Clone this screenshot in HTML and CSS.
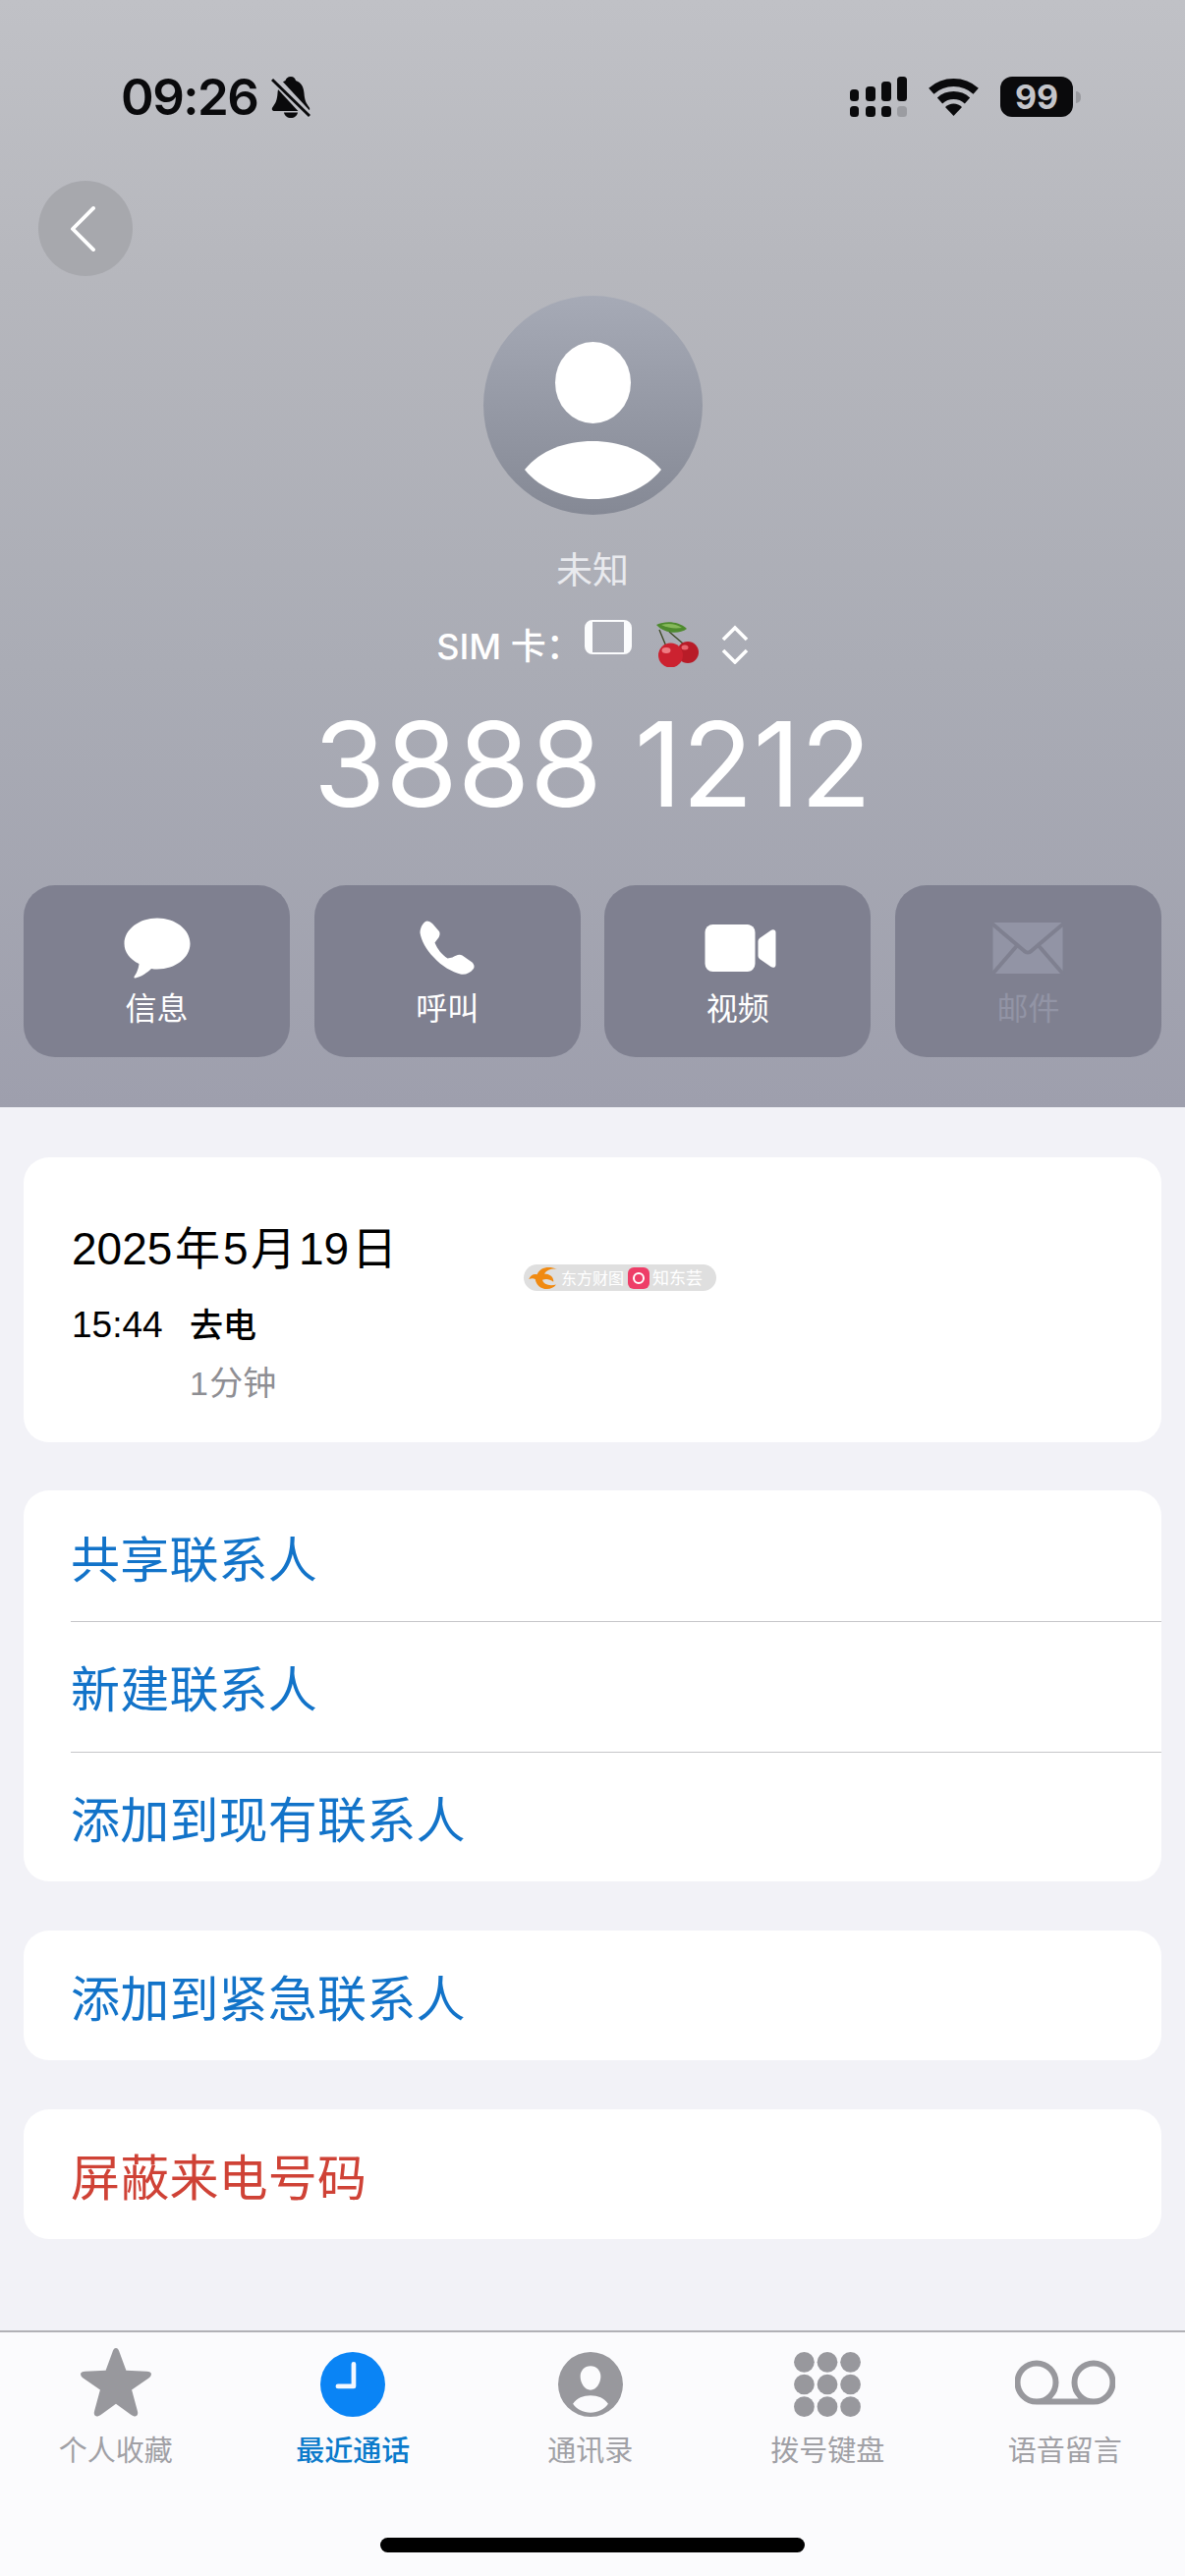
FILE: index.html
```html
<!DOCTYPE html>
<html lang="zh-CN">
<head>
<meta charset="utf-8">
<title>未知</title>
<link rel="stylesheet" href="styles.css">
</head>
<body>
<div class="phone">
  <header class="hero">
    <div class="status">
      <div class="status-left">
        <span class="clock">09:26</span>
        <svg class="bell" viewBox="0 0 40 43"><path d="M20 1c3 0 4.500 2 5 4 6 2 8 7 8.500 13 .5 7 2 10 5 14 1.500 2 .5 4-2 4H3.500c-2.500 0-3.500-2-2-4 3-4 4.500-7 5-14C7 12 9 7 14.500 5c.5-2 2.500-4 5.500-4z" fill="#0a0a0c"/><path d="M13 37.500h14c-.5 3.500-3.500 5.500-7 5.500s-6.500-2-7-5.500z" fill="#0a0a0c"/><path d="M0 0 40 43" stroke="#bfc0c6" stroke-width="9"/><path d="M1 4 39 41" stroke="#0a0a0c" stroke-width="3"/></svg>
      </div>
      <div class="status-right">
        <svg class="signal" viewBox="0 0 58 41"><g fill="#0a0a0c"><rect x="0" y="13" width="9" height="12" rx="3.500"/><rect x="16" y="10" width="10" height="15" rx="3.500"/><rect x="32" y="5" width="10" height="20" rx="3.500"/><rect x="48" y="0" width="10" height="25" rx="3.500"/><rect x="0" y="30" width="9" height="11" rx="3.500"/><rect x="16" y="30" width="10" height="11" rx="3.500"/><rect x="32" y="30" width="10" height="11" rx="3.500"/></g><rect x="48" y="30" width="10" height="11" rx="3.500" fill="#9b9ca1"/></svg>
        <svg class="wifi" viewBox="0 0 51 38"><path d="M2.800 12.700A34 34 0 0 1 48.200 12.700M11.500 22.400A21 21 0 0 1 39.500 22.400" fill="none" stroke="#0a0a0c" stroke-width="8"/><path d="M25.500 38 17 29A12 12 0 0 1 34 29z" fill="#0a0a0c"/></svg>
        <div class="battery"><span class="battery-level">99</span></div>
        <span class="battery-nub"></span>
      </div>
    </div>
    <button class="back" type="button" aria-label="返回">
      <svg class="back-chevron" viewBox="0 0 28 48"><path d="M25 2 3 24l22 22" fill="none" stroke="#fff" stroke-width="4" stroke-linecap="round" stroke-linejoin="round"/></svg>
    </button>
    <div class="avatar">
      <svg class="avatar-figure" viewBox="0 0 223 223"><ellipse cx="111.500" cy="88.500" rx="38.500" ry="41.500" fill="#fff"/><path d="M42 177C58 157 84 148 111 148s53 9 70 29c-16 20-42 30-69 30s-54-10-70-30z" fill="#fff"/></svg>
    </div>
    <div class="name">未知</div>
    <div class="sim-row">
      <span class="sim-label">SIM 卡：</span>
      <span class="sim-card"></span>
      <svg class="cherry" viewBox="0 0 44 46">
        <path d="M3 8 10 25M13 10 27 22" stroke="#3f4a28" stroke-width="1.400" fill="none"/>
        <path d="M0 3C9-1 22-1 31 7 23 13 8 12 0 3z" fill="#4e8a2e"/>
        <path d="M5 3c8-2 15-1 21 3-8 1-15 0-21-3z" fill="#86b85a"/>
        <circle cx="32" cy="31" r="11" fill="#b81c28"/>
        <circle cx="14.500" cy="34" r="12.500" fill="#cc2230"/>
        <ellipse cx="10" cy="29" rx="4.500" ry="3" fill="#ee7c82"/>
        <ellipse cx="29" cy="26" rx="3.500" ry="2.500" fill="#e8666e"/>
      </svg>
      <svg class="updown" viewBox="0 0 28 40"><path d="M2 15 14 3l12 12M2 26l12 12 12-12" fill="none" stroke="#fff" stroke-width="3.600"/></svg>
    </div>
    <div class="number">3888 1212</div>
    <nav class="actions">
      <a class="action">
        <svg class="action-icon" viewBox="0 0 80 62"><path transform="translate(6.500 .5)" d="M33.500 0C52 0 67 11.500 67 26S52 52 33.500 52c-2 0-4 0-6-.5-4 4-10 8-16 9.500-1.500.3-2-.8-1.300-1.800C12 57 14.500 52 15 46.500 5.500 42 0 34.500 0 26 0 11.500 15 0 33.500 0z" fill="#fff"/></svg>
        <span>信息</span>
      </a>
      <a class="action">
        <svg class="action-icon" viewBox="0 0 80 62"><path transform="translate(12.500 3.500)" d="M7 0C9 0 11 1 13 3L19 10C21 12 20 16 18 18L15 22C18 29 22 34 28 38L33 37C36 35 40 33 43 35L53 42C55 44 56 47 54 49 51 53 46 55 41 54 33 52 22 46 14 37 6 29 1 19 0 12 0 7 3 1 7 0z" fill="#fff"/></svg>
        <span>呼叫</span>
      </a>
      <a class="action">
        <svg class="action-icon" viewBox="0 0 80 62"><g transform="translate(6.500 7)" fill="#fff"><rect x="0" y="0" width="51" height="48" rx="8"/><path d="M54 17c0-1 .5-2 1.500-3L67 6c2-1.500 5-1 5 2v33c0 3-3 3.500-5 2L55.500 35c-1-1-1.500-2-1.500-3z"/></g></svg>
        <span>视频</span>
      </a>
      <a class="action action-muted">
        <svg class="action-icon" viewBox="0 0 80 62"><g transform="translate(4.500 5)"><rect x="0" y="0" width="71" height="52" rx="2" fill="#9294a5"/><path d="M-1 1 32 29c2 2 5 2 7 0L72 1M-1 53 25 23M72 53 46 23" fill="none" stroke="#7f8090" stroke-width="4"/></g></svg>
        <span>邮件</span>
      </a>
    </nav>
  </header>

  <main class="details">
    <section class="card call-card">
      <div class="call-date">2025 年 5 月 19 日</div>
      <div class="call-row">
        <span class="call-time">15:44</span>
        <div class="call-info">
          <div class="call-kind">去电</div>
          <div class="call-length">1 分钟</div>
        </div>
      </div>
      <div class="stamp">
        <svg class="stamp-logo" viewBox="0 0 32 26"><path d="M31 3C22-1 12 1 9 9 5 8 2 10 0 14c3-1 5-1 7 0 1 6 6 11 13 11 4 0 8-2 10-5-7 2-14 0-15-5 4-2 8-1 12 2 1-5-4-9-10-9 3-4 8-6 14-5z" fill="#f08a12"/></svg>
        <span class="stamp-text">东方财图</span>
        <span class="stamp-badge"><span class="stamp-eye"></span></span>
        <span class="stamp-text stamp-text-short">知东芸</span>
      </div>
    </section>

    <section class="card">
      <a class="row">共享联系人</a>
      <a class="row">新建联系人</a>
      <a class="row">添加到现有联系人</a>
    </section>
    <section class="card">
      <a class="row">添加到紧急联系人</a>
    </section>
    <section class="card">
      <a class="row row-danger">屏蔽来电号码</a>
    </section>
  </main>

  <footer class="tabbar">
    <div class="tabs">
      <a class="tab">
        <svg class="tab-icon" viewBox="0 0 76 74"><path d="M38 0c2 0 3 2 4 5l7 19 22 1c3 0 5 1 5 3 0 1.500-1 3-3 4.500L55 45l6 22c1 3 .5 5-1 6-1.500 1-3.500 0-6-1.500L38 60 22 71.500c-2.500 1.500-4.500 2.500-6 1.500-1.500-1-2-3-1-6l6-22L3 32.500C1 31 0 29.500 0 28c0-2 2-3 5-3l22-1 7-19c1-3 2-5 4-5z" fill="#98989d"/></svg>
        <span>个人收藏</span>
      </a>
      <a class="tab tab-active">
        <svg class="tab-icon tab-icon-round" viewBox="0 0 70 70"><circle cx="35" cy="35" r="35" fill="#0a84f5"/><path d="M36 13v24H19" fill="none" stroke="#f3f8ff" stroke-width="5" stroke-linecap="round" stroke-linejoin="round"/></svg>
        <span>最近通话</span>
      </a>
      <a class="tab">
        <svg class="tab-icon tab-icon-round" viewBox="0 0 70 70"><path fill-rule="evenodd" d="M35 0a35 35 0 1 1 0 70 35 35 0 0 1 0-70zM35 15c-6.500 0-11 5-11 11.500S28.500 41 35 41s11-8 11-14.500S41.500 15 35 15zM35 47c-8 0-15 3-19 9 4 6 11 9.500 19 9.500S50 62 54 56c-4-6-11-9-19-9z" fill="#98989d"/></svg>
        <span>通讯录</span>
      </a>
      <a class="tab">
        <svg class="tab-icon tab-icon-round" viewBox="0 0 72 70"><g fill="#98989d"><circle cx="11" cy="11" r="11"/><circle cx="36" cy="11" r="11"/><circle cx="61" cy="11" r="11"/><circle cx="11" cy="35" r="11"/><circle cx="36" cy="35" r="11"/><circle cx="61" cy="35" r="11"/><circle cx="11" cy="59" r="11"/><circle cx="36" cy="59" r="11"/><circle cx="61" cy="59" r="11"/></g></svg>
        <span>拨号键盘</span>
      </a>
      <a class="tab">
        <svg class="tab-icon tab-icon-wide" viewBox="0 0 102 46"><path d="M22 42.500a19.500 19.500 0 1 1 0-39 19.500 19.500 0 0 1 0 39h58a19.500 19.500 0 1 0 0-39 19.500 19.500 0 0 0 0 39" fill="none" stroke="#98989d" stroke-width="6"/></svg>
        <span>语音留言</span>
      </a>
    </div>
    <div class="home-indicator"></div>
  </footer>
</div>
</body>
</html>
```

FILE: styles.css
```css
* { box-sizing: border-box; }

html, body { margin: 0; padding: 0; }

body {
  width: 1206px;
  height: 2622px;
  overflow: hidden;
  background: #f2f2f7;
  font-family: "Inter", "Liberation Sans", "Noto Sans CJK SC", sans-serif;
  color: #000;
}

.phone {
  display: flex;
  flex-direction: column;
  height: 2622px;
}

/* Contact header */
.hero {
  display: flex;
  flex-direction: column;
  height: 1127px;
  padding: 0 24px;
  background: linear-gradient(180deg, #c0c1c6 0%, #b6b7bd 25%, #aaacb5 60%, #9e9fad 100%);
}

.status {
  display: flex;
  justify-content: space-between;
  align-items: center;
  height: 43px;
  margin: 77px 82px 0 99px;
}

.status-left, .status-right { display: flex; align-items: center; }

.clock {
  font-size: 51px;
  font-weight: 600;
  line-height: 43px;
  letter-spacing: -1.500px;
  color: #0a0a0c;
}

.bell { width: 40px; height: 43px; margin-left: 14px; }

.signal { width: 58px; height: 41px; }

.wifi { width: 51px; height: 38px; margin-left: 22px; }

.battery {
  width: 74px;
  height: 41px;
  margin-left: 22px;
  border-radius: 12px;
  background: #0a0a0c;
  display: flex;
  align-items: center;
  justify-content: center;
}

.battery-level {
  font-size: 34px;
  font-weight: 700;
  line-height: 41px;
  color: #c4c5ca;
}

.battery-nub {
  width: 5px;
  height: 12px;
  margin-left: 3px;
  border-radius: 0 6px 6px 0;
  background: #9a9ba0;
}

.back {
  display: flex;
  align-items: center;
  justify-content: center;
  align-self: flex-start;
  width: 96px;
  height: 97px;
  margin: 64px 0 0 15px;
  padding: 0 6px 0 0;
  border: 0;
  border-radius: 50%;
  background: #a7a8ad;
}

.back-chevron { width: 27px; height: 46px; }

.avatar {
  align-self: center;
  width: 223px;
  height: 223px;
  margin-top: 20px;
  border-radius: 50%;
  background: linear-gradient(180deg, #a6aab6 0%, #858995 100%);
}

.avatar-figure { display: block; width: 223px; height: 223px; }

.name {
  margin-top: 34px;
  text-align: center;
  font-size: 37px;
  line-height: 46px;
  color: #e9eaee;
}

.sim-row {
  display: flex;
  align-items: center;
  justify-content: center;
  height: 50px;
  margin-top: 22px;
  color: #fff;
}

.sim-label { margin-top: 8px; font-size: 36px; font-weight: 500; white-space: nowrap; }

.sim-card {
  width: 48px;
  height: 35px;
  margin: -6px 0 0 3px;
  border: solid #fbfcfd;
  border-width: 2px 8px;
  border-radius: 8px;
}

.cherry { width: 44px; height: 46px; margin: 10px 0 0 25px; }

.updown { width: 28px; height: 40px; margin: 10px 0 0 22px; }

.number {
  margin-top: 42px;
  text-align: center;
  font-size: 119px;
  font-weight: 400;
  line-height: 120px;
  letter-spacing: -.2px;
  color: #fff;
}

.actions {
  display: grid;
  grid-template-columns: repeat(4, 1fr);
  gap: 24.500px;
  margin-top: 63px;
}

.action {
  display: flex;
  flex-direction: column;
  align-items: center;
  height: 175px;
  padding-top: 33px;
  border-radius: 32px;
  background: #7f8090;
  font-size: 32px;
  line-height: 38px;
  color: #fff;
}

.action-icon { width: 80px; height: 62px; }

.action span { margin-top: 12px; }

.action-muted { color: #9294a5; }

/* Call details and contact actions */
.details {
  display: flex;
  flex-direction: column;
  flex: 1;
  gap: 49.300px;
  padding: 51px 24px 0;
}

.card {
  position: relative;
  border-radius: 26px;
  background: #fff;
}

.call-card {
  height: 290px;
  padding: 65px 49px 0 49px;
}

.call-date {
  font-size: 46px;
  line-height: 56px;
  word-spacing: -10px;
  font-family: "Liberation Sans", "Noto Sans CJK SC", sans-serif;
}

.call-row {
  display: flex;
  margin-top: 25px;
  font-family: "Liberation Sans", "Noto Sans CJK SC", sans-serif;
}

.call-time { width: 120px; font-size: 37px; line-height: 50px; }

.call-kind { font-size: 34px; font-weight: 500; line-height: 50px; }

.call-length {
  margin-top: 9px;
  font-size: 34px;
  line-height: 50px;
  word-spacing: -8px;
  color: #8e8e93;
}

/* Small translucent stamp printed over the card */
.stamp {
  position: absolute;
  left: 509px;
  top: 109px;
  display: flex;
  align-items: center;
  gap: 3px;
  width: 196px;
  height: 27px;
  padding: 0 5px;
  border-radius: 14px;
  background: #dfdfdf;
}

.stamp-logo { width: 30px; height: 24px; flex: none; }

.stamp-text { width: 65px; font-size: 16px; line-height: 20px; white-space: nowrap; color: #fff; }

.stamp-text-short { width: 51px; font-size: 17px; }

.stamp-badge {
  display: flex;
  align-items: center;
  justify-content: center;
  flex: none;
  width: 22px;
  height: 22px;
  border-radius: 6px;
  background: #ee3e68;
}

.stamp-eye { width: 12px; height: 12px; border: 2px solid #fff; border-radius: 50%; }

.row {
  position: relative;
  display: flex;
  align-items: center;
  height: 132.700px;
  padding-left: 48px;
  font-size: 50px;
  letter-spacing: .2px;
  color: #1273c9;
}

.row + .row::before {
  content: "";
  position: absolute;
  left: 48px;
  right: 0;
  top: 0;
  height: 1px;
  background: #c6c6c9;
}

.row-danger { color: #cf4236; }

/* Bottom tab bar */
.tabbar {
  height: 250px;
  border-top: 2px solid #b1b1b6;
  background: #fbfbfd;
}

.tabs {
  display: grid;
  grid-template-columns: repeat(5, 241.500px);
  margin-left: -3px;
  height: 209px;
}

.tab {
  display: flex;
  flex-direction: column;
  align-items: center;
  height: 139px;
  padding-top: 16px;
  font-size: 29px;
  line-height: 36px;
  color: #a0a0a5;
}

.tab span { margin-top: 17px; white-space: nowrap; }

.tab-icon { width: 76px; height: 74px; }

.tab-icon-round { height: 70px; margin-top: 4px; }

.tab-icon-wide { width: 102px; }

.tab-active { color: #0a7acb; font-weight: 500; }

.home-indicator {
  width: 432px;
  height: 15px;
  margin-left: 387px;
  border-radius: 8px;
  background: #000;
}
```
